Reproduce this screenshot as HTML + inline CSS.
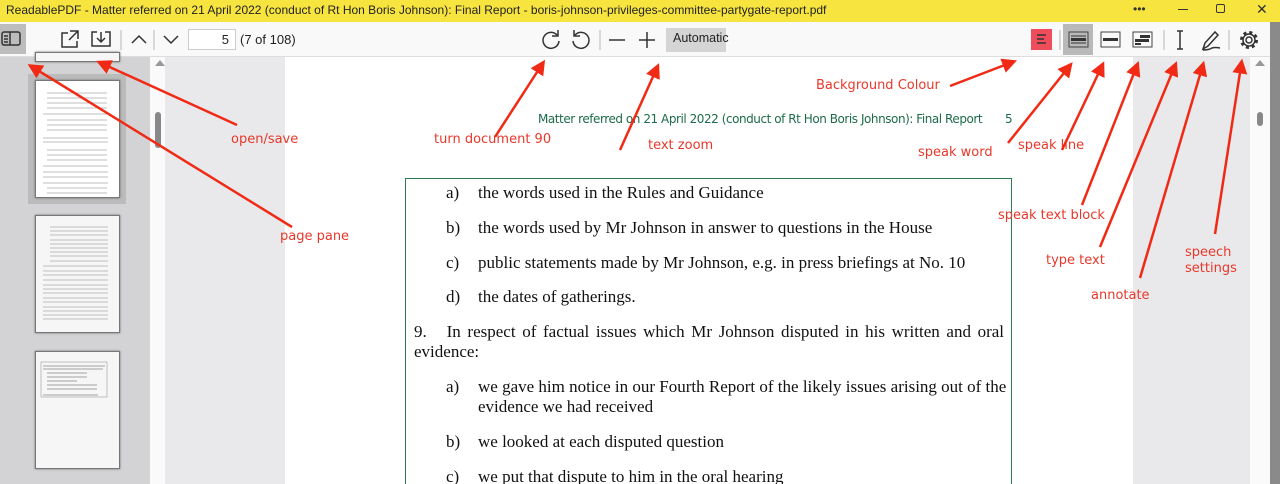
<!DOCTYPE html>
<html><head><meta charset="utf-8"><style>
*{margin:0;padding:0;box-sizing:border-box}
html,body{width:1280px;height:484px;overflow:hidden}
body{font-family:"Liberation Sans",sans-serif}
#w{position:relative;width:1280px;height:484px;overflow:hidden;background:#e9e9ec}
.a{position:absolute}
.title{left:0;top:0;width:1280px;height:22px;background:#f7e43f;font-size:12px;color:#222;padding:3px 0 0 6px;white-space:nowrap}
.tb{left:0;top:22px;width:1280px;height:35px;background:#f9f9f9;border-bottom:1px solid #ddd}
.ser{font-family:"Liberation Serif",serif;font-size:17px;color:#111;white-space:nowrap;line-height:20px}
.lab{font-family:"DejaVu Sans",sans-serif;font-size:13px;color:#e8382a;white-space:nowrap}
.thumb{background:#f6f6f6;border:1px solid #777;box-shadow:0 0 2px #666}
</style></head><body><div id="w">
<div class="a title">ReadablePDF - Matter referred on 21 April 2022 (conduct of Rt Hon Boris Johnson): Final Report - boris-johnson-privileges-committee-partygate-report.pdf</div>
<div class="a" style="left:1133px;top:2px;font-size:12px;color:#333">•••</div>
<div class="a" style="left:1178px;top:9px;width:10px;height:1px;background:#333"></div>
<div class="a" style="left:1216px;top:4px;width:9px;height:9px;border:1px solid #333;border-radius:2px"></div>
<div class="a" style="left:1256px;top:1px;font-size:14px;color:#333">✕</div>
<div class="a tb"></div>
<div class="a" style="left:0;top:24px;width:26px;height:30px;background:#bdbdbd"></div>
<svg class="a" style="left:0;top:22px" width="1280" height="35" fill="none" stroke="#333" stroke-width="1.5">
<rect x="2" y="10" width="18" height="13" rx="2"/><line x1="10" y1="10" x2="10" y2="23"/><line x1="4" y1="14" x2="8" y2="14"/><line x1="4" y1="17" x2="8" y2="17"/><line x1="4" y1="20" x2="8" y2="20"/>
<path d="M68 11h-6v14h15v-6M70 9h8v8M78 9l-9 9"/>
<path d="M97 10h-5v14h18v-14h-5M101 10v9M97 16l4 4 4-4"/>
<line x1="121" y1="8" x2="121" y2="28" stroke="#ccc"/>
<path d="M132 21l7-7 7 7"/>
<line x1="154" y1="8" x2="154" y2="28" stroke="#ccc"/>
<path d="M164 14l7 7 7-7"/>
<path d="M557 13a8 8 0 1 0 2 6M558 8v6h-6"/>
<path d="M575 13a8 8 0 1 1 -2 6M574 8v6h6"/>
<line x1="600" y1="8" x2="600" y2="28" stroke="#ccc"/>
<line x1="609" y1="18" x2="625" y2="18"/>
<line x1="639" y1="18" x2="655" y2="18"/><line x1="647" y1="10" x2="647" y2="26"/>
<rect x="1031" y="7" width="21" height="21" fill="#ef4d5c" stroke="none"/>
<path d="M1037 13h9M1037 17h7M1037 21h9" stroke="#333"/>
<line x1="1060" y1="8" x2="1060" y2="28" stroke="#ccc"/>
<rect x="1063" y="2" width="30" height="31" fill="#b9b9b9" stroke="none"/>
<rect x="1069" y="10" width="19" height="15" stroke="#444" stroke-width="1"/><rect x="1071" y="16" width="15" height="3" fill="#333" stroke="none"/><line x1="1071" y1="14" x2="1086" y2="14" stroke-width="1"/><line x1="1071" y1="21" x2="1086" y2="21" stroke-width="1"/>
<rect x="1101" y="10" width="19" height="15" stroke="#444" stroke-width="1"/><rect x="1103" y="16" width="15" height="3" fill="#333" stroke="none"/>
<rect x="1133" y="10" width="19" height="15" stroke="#444" stroke-width="1"/><rect x="1140" y="13" width="10" height="3" fill="#333" stroke="none"/><rect x="1135" y="17" width="14" height="3" fill="#333" stroke="none"/><rect x="1135" y="21" width="6" height="2" fill="#333" stroke="none"/>
<line x1="1164" y1="8" x2="1164" y2="28" stroke="#ccc"/>
<path d="M1177 9h6M1180 9v18M1177 27h6"/>
<path d="M1203 27l2-6 10-11 3 3-10 11zM1203 28q6 0 9-2 3-1 8 0"/>
<line x1="1229" y1="8" x2="1229" y2="28" stroke="#ccc"/>
<circle cx="1249" cy="18" r="3"/><circle cx="1249" cy="18" r="7.5" stroke-dasharray="3 2.9" stroke-width="3"/><circle cx="1249" cy="18" r="6"/>
</svg>
<div class="a" style="left:188px;top:29px;width:48px;height:21px;background:#fff;border:1px solid #ccc;font-size:13px;text-align:right;padding:2px 6px 0 0;color:#222">5</div>
<div class="a" style="left:240px;top:32px;font-size:13px;color:#222">(7 of 108)</div>
<div class="a" style="left:666px;top:28px;width:60px;height:24px;background:#d5d5d5;font-size:12.5px;color:#222;padding:3px 0 0 7px">Automatic</div>
<div class="a" style="left:0;top:57px;width:150px;height:427px;background:#d3d3d6"></div>
<div class="a" style="left:150px;top:57px;width:15px;height:427px;background:#fafafa"></div>
<div class="a" style="left:155px;top:60px;border:5px solid transparent;border-bottom:6px solid #999;border-top:0"></div>
<div class="a" style="left:155px;top:112px;width:6px;height:36px;background:#888;border-radius:3px"></div>
<div class="a thumb" style="left:35px;top:52px;width:85px;height:10px"></div>
<div class="a" style="left:28px;top:74px;width:98px;height:130px;background:#bbb"></div>
<div class="a thumb" style="left:35px;top:80px;width:85px;height:118px;background:#fff"></div>
<div class="a thumb" style="left:35px;top:215px;width:85px;height:118px"></div>
<div class="a thumb" style="left:35px;top:351px;width:85px;height:118px"></div>
<svg class="a" style="left:35px;top:80px" width="90" height="400" stroke="#aaa" stroke-width="0.7">
<g><path d="M12 13h60M12 18h60M12 23h60M12 28h60M8 34h65M12 40h60M12 45h60M12 50h60M8 58h65M8 62h65M12 70h60M12 75h60M12 80h60M8 86h65M8 92h65M8 97h65M8 103h65M12 108h60M12 113h60"/></g>
<g transform="translate(0,135)"><path d="M15 12h58M15 16h58M15 20h58M15 25h58M15 29h58M15 33h58M15 37h58M15 41h58M15 46h58M8 51h65M8 56h65M8 60h65M8 65h65M8 70h65M8 74h65M8 78h65M8 83h65M8 87h65M8 92h65M8 96h65M8 100h65M8 104h65"/></g>
<g transform="translate(0,271)" stroke="#888"><rect x="6" y="11" width="66" height="35" fill="none" stroke-width="0.5"/><path d="M8 15h62M8 18h60M12 22h40M12 26h40M12 30h30M12 34h50M12 38h50M8 44h55"/></g>
</svg>
<div class="a" style="left:285px;top:57px;width:848px;height:427px;background:#fff"></div>
<div class="a" style="left:1250px;top:57px;width:20px;height:427px;background:#fafafa"></div>
<div class="a" style="left:1255px;top:60px;border:5px solid transparent;border-bottom:6px solid #999;border-top:0"></div>
<div class="a" style="left:1257px;top:112px;width:6px;height:14px;background:#888;border-radius:3px"></div>
<div class="a" style="left:1270px;top:22px;width:10px;height:462px;background:#8a8a8a"></div>
<div class="a" style="left:538px;top:112px;font-size:12px;color:#1d6b4a;font-family:'DejaVu Sans',sans-serif;letter-spacing:-0.45px;white-space:nowrap">Matter referred on 21 April 2022 (conduct of Rt Hon Boris Johnson): Final Report</div>
<div class="a" style="left:1005px;top:112px;font-size:12px;color:#1d6b4a;font-family:'DejaVu Sans',sans-serif">5</div>
<div class="a" style="left:405px;top:178px;width:607px;height:330px;border:1.5px solid #2a7a52"></div>
<div class="a ser" style="left:446px;top:183px">a)</div><div class="a ser" style="left:478px;top:183px">the words used in the Rules and Guidance</div>
<div class="a ser" style="left:446px;top:218px">b)</div><div class="a ser" style="left:478px;top:218px">the words used by Mr Johnson in answer to questions in the House</div>
<div class="a ser" style="left:446px;top:253px">c)</div><div class="a ser" style="left:478px;top:253px">public statements made by Mr Johnson, e.g. in press briefings at No. 10</div>
<div class="a ser" style="left:446px;top:287px">d)</div><div class="a ser" style="left:478px;top:287px">the dates of gatherings.</div>
<div class="a ser" style="left:414px;top:322px;width:590px;text-align:justify;text-align-last:justify">9.&nbsp;&nbsp; In respect of factual issues which Mr Johnson disputed in his written and oral</div>
<div class="a ser" style="left:414px;top:342px">evidence:</div>
<div class="a ser" style="left:446px;top:377px">a)</div><div class="a ser" style="left:478px;top:377px;width:526px;text-align:justify;text-align-last:justify">we gave him notice in our Fourth Report of the likely issues arising out of the</div>
<div class="a ser" style="left:478px;top:397px">evidence we had received</div>
<div class="a ser" style="left:446px;top:432px">b)</div><div class="a ser" style="left:478px;top:432px">we looked at each disputed question</div>
<div class="a ser" style="left:446px;top:467px">c)</div><div class="a ser" style="left:478px;top:467px">we put that dispute to him in the oral hearing</div>
<div class="a lab" style="left:816px;top:78px">Background Colour</div>
<div class="a lab" style="left:231px;top:132px">open/save</div>
<div class="a lab" style="left:280px;top:229px">page pane</div>
<div class="a lab" style="left:434px;top:132px">turn document 90</div>
<div class="a lab" style="left:648px;top:138px">text zoom</div>
<div class="a lab" style="left:918px;top:145px">speak word</div>
<div class="a lab" style="left:1018px;top:138px">speak line</div>
<div class="a lab" style="left:998px;top:208px">speak text block</div>
<div class="a lab" style="left:1046px;top:253px">type text</div>
<div class="a lab" style="left:1091px;top:288px">annotate</div>
<div class="a lab" style="left:1185px;top:245px;line-height:16px">speech<br>settings</div>
<svg class="a" style="left:0;top:0" width="1280" height="484">
<defs><marker id="m" markerWidth="6" markerHeight="6" refX="3" refY="3" orient="auto" markerUnits="strokeWidth"><path d="M0,0 L6,3 L0,6z" fill="#f02a14"/></marker></defs>
<g stroke="#f02a14" stroke-width="2.5" marker-end="url(#m)">
<line x1="292" y1="227" x2="34" y2="68"/>
<line x1="237" y1="125" x2="103" y2="64"/>
<line x1="495" y1="137" x2="541" y2="66"/>
<line x1="620" y1="150" x2="656" y2="70"/>
<line x1="950" y1="86" x2="1010" y2="63"/>
<line x1="1008" y1="143" x2="1068" y2="68"/>
<line x1="1062" y1="150" x2="1101" y2="68"/>
<line x1="1082" y1="205" x2="1136" y2="68"/>
<line x1="1100" y1="247" x2="1174" y2="68"/>
<line x1="1140" y1="278" x2="1202" y2="68"/>
<line x1="1215" y1="234" x2="1241" y2="66"/>
</g></svg>
</div></body></html>
